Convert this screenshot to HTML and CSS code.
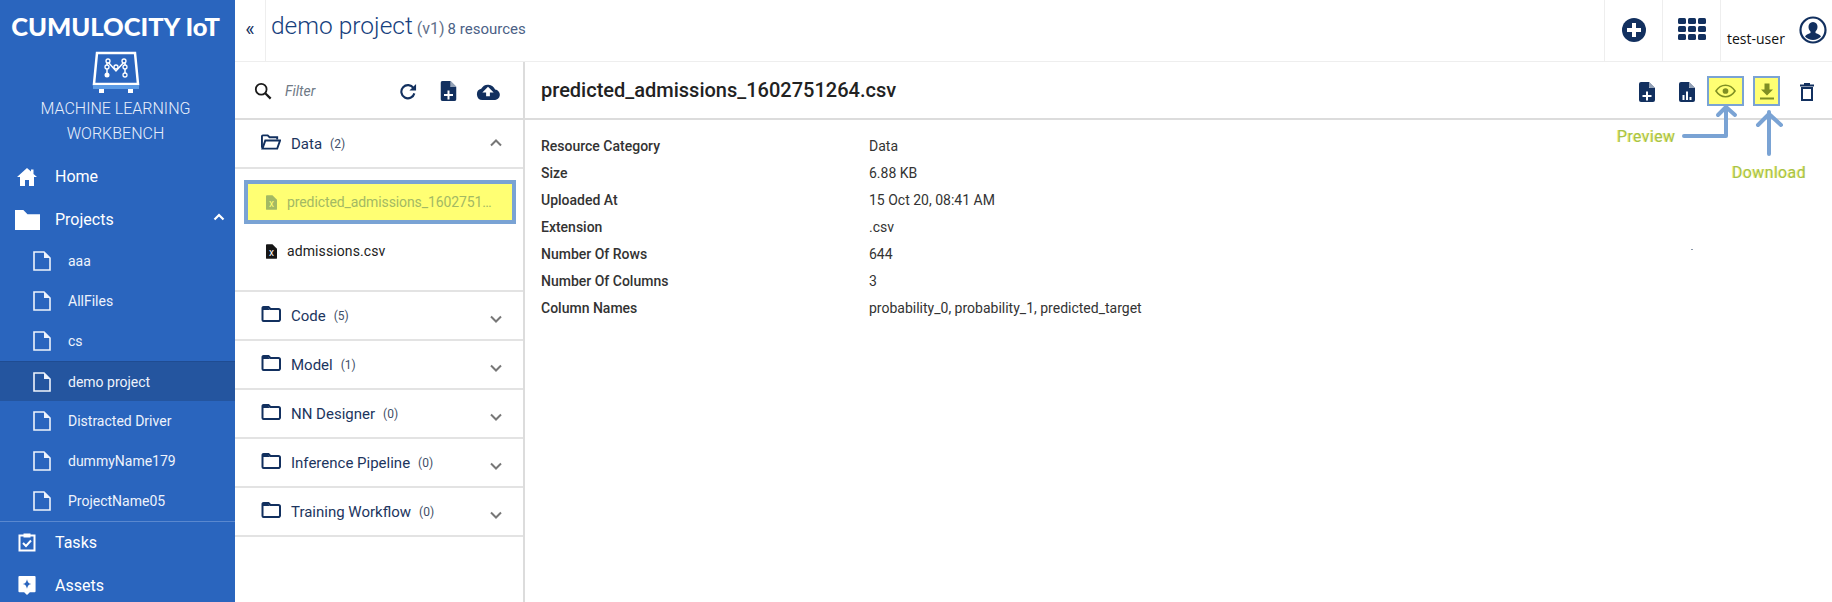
FILE: index.html
```html
<!DOCTYPE html>
<html lang="en">
<head>
<meta charset="utf-8">
<title>Machine Learning Workbench</title>
<link rel="stylesheet" href="styles.css">
</head>
<body>
<svg class="defs" width="0" height="0" aria-hidden="true">
  <symbol id="doc" viewBox="0 0 18 20"><path d="M1 1h10l6 6v12H1z" fill="none" stroke="currentColor" stroke-width="1.6"/><path d="M11 1v6h6z" fill="currentColor"/></symbol>
  <symbol id="folder" viewBox="0 0 20 16"><path d="M1.500 4V2a1 1 0 0 1 1-1h5l2 2h8a1.500 1.500 0 0 1 1.500 1.500V13.500A1.500 1.500 0 0 1 18 15H2.500A1 1 0 0 1 1.500 14z" fill="none" stroke="currentColor" stroke-width="2"/><path d="M1 1.500h6l2 2.500H1z" fill="currentColor"/></symbol>
  <symbol id="chev-down" viewBox="0 0 12 8"><path d="M1 1.500l5 5 5-5" fill="none" stroke="currentColor" stroke-width="2"/></symbol>
  <symbol id="filex" viewBox="0 0 12 16"><path d="M0 1a1 1 0 0 1 1-1h6l5 5v10a1 1 0 0 1-1 1H1a1 1 0 0 1-1-1z" fill="currentColor"/></symbol>
  <symbol id="filesolid" viewBox="0 0 16 20"><path d="M0 2a2 2 0 0 1 2-2h8l6 6v12a2 2 0 0 1-2 2H2a2 2 0 0 1-2-2z" fill="currentColor"/><path d="M10 0v6h6z" fill="#fff"/><path d="M10 0l6 6h-5a1 1 0 0 1-1-1z" fill="currentColor" opacity=".45"/></symbol>
</svg>

<div class="app">
  <aside class="sidebar">
    <div class="brand">CUMULOCITY IoT</div>
    <svg class="logo" viewBox="0 0 48 42" aria-hidden="true">
      <path d="M5 2h38l3 31H2z" fill="#2a65be" stroke="#fff" stroke-width="2.500"/>
      <path d="M1 34h46v4H1z" fill="#5b9be6"/>
      <path d="M7 38h5v4H7zM36 38h5v4h-5z" fill="#fff"/>
      <path d="M15 24V10l9 10 9-10v14" fill="none" stroke="#fff" stroke-width="1.500"/>
      <g fill="#2a65be" stroke="#fff" stroke-width="1.300"><circle cx="16" cy="10" r="2"/><circle cx="32" cy="10" r="2"/><circle cx="15" cy="16" r="2"/><circle cx="33" cy="16" r="2"/><circle cx="24" cy="16" r="2"/><circle cx="33" cy="24" r="2"/></g>
      <circle cx="15" cy="24" r="2.500" fill="#fff"/>
    </svg>
    <div class="app-name">MACHINE LEARNING<br>WORKBENCH</div>
    <nav class="nav">
      <a class="nav-item nav-home">
        <svg class="nav-icon" viewBox="0 0 20 18" aria-hidden="true"><path d="M10 0L0 9h3v9h5v-6h4v6h5V9h3l-3.500-3V1.500h-2.500v2z" fill="#fff"/></svg>
        Home
      </a>
      <a class="nav-item nav-projects">
        <svg class="nav-icon nav-folder" viewBox="0 0 24 19" aria-hidden="true"><path d="M0 0h8l4 4h12v15H0z" fill="#fff"/></svg>
        Projects
        <svg class="nav-chev" viewBox="0 0 12 8" aria-hidden="true"><path d="M1.500 6.500L6 2l4.500 4.500" fill="none" stroke="#fff" stroke-width="2.200"/></svg>
      </a>
      <a class="sub-item"><svg class="sub-icon"><use href="#doc"/></svg>aaa</a>
      <a class="sub-item"><svg class="sub-icon"><use href="#doc"/></svg>AllFiles</a>
      <a class="sub-item"><svg class="sub-icon"><use href="#doc"/></svg>cs</a>
      <a class="sub-item active"><svg class="sub-icon"><use href="#doc"/></svg>demo project</a>
      <a class="sub-item"><svg class="sub-icon"><use href="#doc"/></svg>Distracted Driver</a>
      <a class="sub-item"><svg class="sub-icon"><use href="#doc"/></svg>dummyName179</a>
      <a class="sub-item"><svg class="sub-icon"><use href="#doc"/></svg>ProjectName05</a>
      <a class="nav-item nav-tasks">
        <svg class="nav-icon" viewBox="0 0 18 20" aria-hidden="true"><path d="M1.500 3.500h15v15h-15z" fill="none" stroke="#fff" stroke-width="2"/><path d="M5.500 1.500h7v4h-7z" fill="#fff"/><path d="M5 11l3 3 5-5.500" fill="none" stroke="#fff" stroke-width="2"/></svg>
        Tasks
      </a>
      <a class="nav-item">
        <svg class="nav-icon" viewBox="0 0 18 21" aria-hidden="true"><path d="M1 0h16a1 1 0 0 1 1 1v15a1 1 0 0 1-1 1h-5l-3 3-3-3H1a1 1 0 0 1-1-1V1a1 1 0 0 1 1-1z" fill="#fff"/><path d="M9 3.500c.6 3 1.500 4.300 4.500 5-3 .7-3.900 2-4.500 5-.6-3-1.500-4.300-4.500-5 3-.7 3.900-2 4.500-5z" fill="#2a65be"/></svg>
        Assets
      </a>
    </nav>
  </aside>

  <div class="main">
    <header class="topbar">
      <button class="collapse">«</button>
      <h1 class="page-title">demo project <small class="ver">(v1)</small> <small class="res">8 resources</small></h1>
      <div class="top-cell">
        <svg class="top-icon" viewBox="0 0 24 24" aria-hidden="true"><circle cx="12" cy="12" r="12" fill="#12305f"/><path d="M10 5h4v5h5v4h-5v5h-4v-5H5v-4h5z" fill="#fff"/></svg>
      </div>
      <div class="top-cell">
        <svg class="grid-icon" viewBox="0 0 28 22" aria-hidden="true"><g fill="#12305f"><rect width="8" height="6" rx="1.500"/><rect x="10" width="8" height="6" rx="1.500"/><rect x="20" width="8" height="6" rx="1.500"/><rect y="8" width="8" height="6" rx="1.500"/><rect x="10" y="8" width="8" height="6" rx="1.500"/><rect x="20" y="8" width="8" height="6" rx="1.500"/><rect y="16" width="8" height="6" rx="1.500"/><rect x="10" y="16" width="8" height="6" rx="1.500"/><rect x="20" y="16" width="8" height="6" rx="1.500"/></g></svg>
      </div>
      <div class="user">
        <span class="user-name">test-user</span>
        <svg class="avatar" viewBox="0 0 28 28" aria-hidden="true"><circle cx="14" cy="14" r="12.500" fill="none" stroke="#12305f" stroke-width="2.200"/><path d="M14 6c3 0 4.500 2.200 4.500 4.800 0 2-.8 3.700-2 4.700v1.500c2.500 1 5 1.800 5.500 3.500a11 11 0 0 1-16 0c.5-1.700 3-2.500 5.500-3.500v-1.500c-1.200-1-2-2.700-2-4.700C9.500 8.200 11 6 14 6z" fill="#12305f"/></svg>
      </div>
    </header>

    <div class="content">
      <section class="panel">
        <div class="toolbar">
          <svg class="search" viewBox="0 0 20 20" aria-hidden="true"><circle cx="8" cy="8" r="6" fill="none" stroke="#1a1a1a" stroke-width="2"/><path d="M12.500 12.500L18.500 18.500" stroke="#1a1a1a" stroke-width="2.500"/></svg>
          <span class="filter">Filter</span>
          <svg class="tool-refresh" viewBox="0 0 18 18" aria-hidden="true"><path d="M15.200 11a7 7 0 1 1-.9-5.600" fill="none" stroke="#12305f" stroke-width="2.200"/><path d="M17 1v7h-7z" fill="#12305f"/></svg>
          <svg class="tool-doc" viewBox="0 0 16 20" aria-hidden="true"><use href="#filesolid"/><path d="M7 9.500h2V13h3.500v2H9v3.500H7V15H3.500v-2H7z" fill="#fff"/></svg>
          <svg class="tool-upload" viewBox="0 0 24 18" aria-hidden="true"><path d="M6 18a6 6 0 0 1-1.200-11.800A8 8 0 0 1 19.500 7 5.500 5.500 0 0 1 18.500 18z" fill="#12305f"/><path d="M12 4l6 6h-4v4h-4v-4H6z" fill="#fff"/></svg>
        </div>
        <div class="group open">
          <svg class="group-icon" viewBox="0 0 21 16" aria-hidden="true"><path d="M1 14V2a1 1 0 0 1 1-1h5l2 2h8v2.500" fill="none" stroke="#12305f" stroke-width="2"/><path d="M4.500 6.500H20l-3 8.500H1.500z" fill="none" stroke="#12305f" stroke-width="2"/></svg>
          <span class="group-name">Data</span><span class="group-count">(2)</span>
          <svg class="chev" viewBox="0 0 12 8" aria-hidden="true"><path d="M1 6.500l5-5 5 5" fill="none" stroke="currentColor" stroke-width="2"/></svg>
        </div>
        <div class="files">
          <div class="file file-hl">
            <svg class="file-icon" aria-hidden="true"><use href="#filex"/></svg><i class="file-x">x</i>
            <span class="file-name">predicted_admissions_1602751…</span>
          </div>
          <div class="file">
            <svg class="file-icon" aria-hidden="true"><use href="#filex"/></svg><i class="file-x">x</i>
            <span class="file-name">admissions.csv</span>
          </div>
        </div>
        <div class="group"><svg class="group-icon"><use href="#folder"/></svg><span class="group-name">Code</span><span class="group-count">(5)</span><svg class="chev"><use href="#chev-down"/></svg></div>
        <div class="group"><svg class="group-icon"><use href="#folder"/></svg><span class="group-name">Model</span><span class="group-count">(1)</span><svg class="chev"><use href="#chev-down"/></svg></div>
        <div class="group"><svg class="group-icon"><use href="#folder"/></svg><span class="group-name">NN Designer</span><span class="group-count">(0)</span><svg class="chev"><use href="#chev-down"/></svg></div>
        <div class="group"><svg class="group-icon"><use href="#folder"/></svg><span class="group-name">Inference Pipeline</span><span class="group-count">(0)</span><svg class="chev"><use href="#chev-down"/></svg></div>
        <div class="group"><svg class="group-icon"><use href="#folder"/></svg><span class="group-name">Training Workflow</span><span class="group-count">(0)</span><svg class="chev"><use href="#chev-down"/></svg></div>
      </section>

      <section class="detail">
        <div class="detail-head">
          <h2 class="detail-title">predicted_admissions_1602751264.csv</h2>
          <svg class="act act-1" viewBox="0 0 16 20" aria-hidden="true"><use href="#filesolid"/><path d="M7 9.500h2V13h3.500v2H9v3.500H7V15H3.500v-2H7z" fill="#fff"/></svg>
          <svg class="act act-2" viewBox="0 0 16 20" aria-hidden="true"><use href="#filesolid"/><path d="M3.500 13h2v5h-2zM7 9.500h2V18H7zM10.500 15h2v3h-2z" fill="#fff"/></svg>
          <span class="act-box box-eye">
            <svg class="eye" viewBox="0 0 22 14" aria-hidden="true"><path d="M1 7c2.500-3.800 6-6 10-6s7.500 2.200 10 6c-2.500 3.800-6 6-10 6S3.500 10.800 1 7z" fill="none" stroke="#7f8f24" stroke-width="1.600"/><circle cx="11" cy="7" r="3" fill="#7f8f24"/></svg>
          </span>
          <span class="act-box box-dl">
            <svg class="dl" viewBox="0 0 14 16" aria-hidden="true"><path d="M4.500 0h5v6H13l-6 6-6-6h3.500zM0 14h14v2H0z" fill="#7f8f24"/></svg>
          </span>
          <svg class="act act-trash" viewBox="0 0 14 18" aria-hidden="true"><path d="M0 2.500h14M4 1h6" stroke="#12305f" stroke-width="2" fill="none"/><path d="M2 5h10v12H2z" fill="none" stroke="#12305f" stroke-width="2"/></svg>
        </div>
        <dl class="props">
          <dt>Resource Category</dt><dd>Data</dd>
          <dt>Size</dt><dd>6.88 KB</dd>
          <dt>Uploaded At</dt><dd>15 Oct 20, 08:41 AM</dd>
          <dt>Extension</dt><dd>.csv</dd>
          <dt>Number Of Rows</dt><dd>644</dd>
          <dt>Number Of Columns</dt><dd>3</dd>
          <dt>Column Names</dt><dd>probability_0, probability_1, predicted_target</dd>
        </dl>
      </section>
    </div>
  </div>

  <svg class="arrows" viewBox="0 0 1832 602" aria-hidden="true">
    <g fill="none" stroke="#7aa3d4" stroke-width="4" stroke-linecap="round" stroke-linejoin="round">
      <path d="M1684 136h42v-28M1718 115l8-8 9 8"/>
      <path d="M1769 154v-42M1758 125l11-11 12 11"/>
    </g>
  </svg>
  <span class="note note-preview">Preview</span>
  <span class="note note-download">Download</span>
  <span class="speck"></span>
</div>
</body>
</html>
```
FILE: styles.css
```css
* { box-sizing: border-box; }
html, body { margin: 0; height: 100%; }
body { font-family: Roboto, "Liberation Sans", sans-serif; color: #1d1d1d; background: #fff; overflow: hidden; }
.defs { position: absolute; }
.app { position: relative; display: flex; width: 1832px; height: 602px; overflow: hidden; }

.sidebar { width: 235px; flex: none; background: #2a65be; color: #fff; display: flex; flex-direction: column; align-items: center; overflow: hidden; }
.brand { font-family: Lato, Roboto, sans-serif; font-weight: 900; font-size: 25.5px; line-height: 30px; margin: 11px 4px 0 0; white-space: nowrap; }
.logo { width: 48px; height: 42px; margin: 10px 4px 0 0; flex: none; }
.app-name { font-size: 16px; font-weight: 300; line-height: 25px; text-align: center; color: #e8effb; margin: 3px 4px 0 0; height: 50px; }
.nav { width: 100%; margin-top: 9px; }
.nav-item { display: flex; align-items: center; height: 43px; padding-left: 17px; font-size: 16px; color: #fff; }
.nav-icon { width: 20px; height: 20px; margin-right: 18px; flex: none; }
.nav-folder { width: 25px; margin-left: -2px; margin-right: 15px; }
.nav-projects { position: relative; }
.nav-chev { width: 12px; height: 8px; position: absolute; left: 213px; top: 15px; }
.nav-tasks { border-top: 1px solid #5a88cf; height: 43px; padding-bottom: 2px; }
.sub-item { display: flex; align-items: center; height: 40px; padding-left: 33px; font-size: 14px; color: #eef3fc; }
.sub-item.active { background: #24559f; border-top: 1px solid #1f4c92; }
.sub-icon { width: 18px; height: 20px; margin-right: 17px; flex: none; color: #eef3fc; }

.main { flex: 1; min-width: 0; display: flex; flex-direction: column; }
.topbar { height: 62px; flex: none; display: flex; align-items: stretch; border-bottom: 1px solid #eeeeee; }
.collapse { width: 31px; border: 0; border-right: 1px solid #eeeeee; background: none; padding: 0 0 4px; font-family: Roboto, sans-serif; font-size: 20px; color: #12305f; }
.page-title { flex: 1; margin: 0; padding: 8px 0 0 5px; font-size: 24.5px; line-height: 36px; font-weight: 300; color: #16407d; white-space: nowrap; }
.ver { font-size: 16px; font-weight: 400; color: #5f6f8a; margin-left: -2px; }
.res { font-size: 15px; font-weight: 400; color: #4b6186; margin-left: -3px; }
.top-cell { width: 58px; flex: none; border-left: 1px solid #eeeeee; display: flex; align-items: center; justify-content: center; padding-bottom: 2px; }
.top-icon { width: 24px; height: 24px; }
.grid-icon { width: 28px; height: 22px; margin-bottom: 2px; }
.user { width: 112px; flex: none; border-left: 1px solid #eeeeee; display: flex; align-items: center; padding-left: 6px; }
.user-name { font-family: "Open Sans", sans-serif; font-size: 14px; color: #111; padding-top: 16px; }
.avatar { width: 28px; height: 28px; margin-left: 14px; margin-bottom: 2px; }

.content { flex: 1; display: flex; min-height: 0; }
.panel { width: 290px; flex: none; border-right: 2px solid #dcdcdc; }
.toolbar { height: 58px; display: flex; align-items: center; border-bottom: 2px solid #dcdcdc; position: relative; }
.search { width: 18px; height: 18px; margin: 1px 0 0 19px; flex: none; }
.filter { font-size: 14px; font-style: italic; color: #6f7a86; margin: 1px 0 0 13px; flex: 1; }
.tool-refresh { width: 17px; height: 17px; margin: 2px 23px 0 0; flex: none; }
.tool-doc { width: 17px; height: 20px; margin: 2px 19px 0 0; flex: none; color: #12305f; }
.tool-upload { width: 24px; height: 17px; margin: 2px 23px 0 0; flex: none; }

.group { height: 49px; display: flex; align-items: center; padding-left: 26px; border-bottom: 2px solid #e3e3e3; position: relative; color: #1c355e; }
.group-icon { width: 20px; height: 16px; flex: none; margin-right: 10px; margin-bottom: 3px; color: #12305f; }
.group-name { font-size: 15px; }
.group-count { font-size: 12px; margin-left: 8px; color: #3f4f68; }
.chev { width: 12px; height: 8px; position: absolute; left: 255px; top: 23px; color: #777; }
.group.open .chev { top: 19px; }
.files { height: 123px; border-bottom: 2px solid #e3e3e3; padding-top: 11px; }
.file { height: 42px; margin: 0 7px 0 9px; display: flex; align-items: center; padding-left: 22px; font-size: 14px; color: #222; position: relative; }
.file-hl { height: 44px; background: #ffff73; border: 4px solid #7aa3d4; padding-left: 18px; color: #a3b964; margin-bottom: 6px; }
.file-icon { width: 11px; height: 15px; flex: none; color: #161616; margin-right: 10px; }
.file-hl .file-icon { color: #a3b964; }
.file-x { position: absolute; left: 22px; top: 18px; width: 11px; text-align: center; font-style: normal; font-size: 10px; line-height: 10px; color: #fff; }
.file-hl .file-x { left: 18px; top: 15px; color: #ffff73; }
.file-name { letter-spacing: .1px; white-space: nowrap; }
.file-hl .file-name { letter-spacing: -.1px; }

.detail { flex: 1; min-width: 0; }
.detail-head { height: 58px; border-bottom: 2px solid #dcdcdc; position: relative; display: flex; align-items: center; }
.detail-title { margin: 0 0 0 16px; font-size: 20px; line-height: 28px; font-weight: 500; color: #222; }
.act { position: absolute; top: 20px; width: 16px; height: 20px; color: #12305f; }
.act-1 { left: 1114px; }
.act-2 { left: 1154px; }
.act-trash { left: 1275px; width: 14px; height: 18px; top: 21px; }
.act-box { position: absolute; top: 14px; height: 30px; background: #ffff73; border: 2px solid #7aa3d4; display: flex; align-items: center; justify-content: center; }
.box-eye { left: 1182px; width: 37px; }
.box-dl { left: 1228px; width: 27px; }
.eye { width: 21px; height: 14px; }
.dl { width: 14px; height: 17px; }
.props { margin: 13px 0 0 16px; display: grid; grid-template-columns: 328px 1fr; grid-auto-rows: 27px; font-size: 14px; line-height: 27px; }
.props dt { font-weight: 500; color: #333; }
.props dd { margin: 0; color: #333; }

.arrows { position: absolute; left: 0; top: 0; width: 1832px; height: 602px; pointer-events: none; }
.note { position: absolute; font-size: 16px; letter-spacing: .35px; color: #a5c24a; line-height: 20px; text-shadow: -1px 0 0 #f4f48a; }
.note-preview { left: 1617px; top: 127px; }
.note-download { left: 1732px; top: 163px; }
.speck { position: absolute; left: 1691px; top: 249px; width: 2px; height: 1px; background: #8a97a8; }
```
